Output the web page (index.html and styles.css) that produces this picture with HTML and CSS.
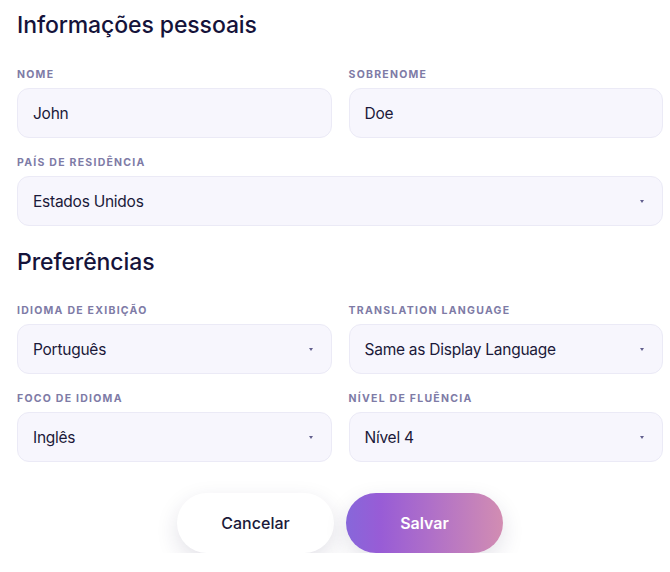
FILE: index.html
```html
<!DOCTYPE html>
<html lang="pt">
<head>
<meta charset="utf-8">
<title>Informações pessoais</title>
<link rel="stylesheet" href="styles.css">
</head>
<body>
<main class="form">
  <h2 class="section-title first">Informações pessoais</h2>
  <div class="grid">
    <div class="field">
      <div class="label">Nome</div>
      <div class="control">John</div>
    </div>
    <div class="field">
      <div class="label">Sobrenome</div>
      <div class="control">Doe</div>
    </div>
    <div class="field full">
      <div class="label">País de residência</div>
      <div class="control select">Estados Unidos<span class="caret"></span></div>
    </div>
  </div>

  <h2 class="section-title">Preferências</h2>
  <div class="grid">
    <div class="field">
      <div class="label">Idioma de exibição</div>
      <div class="control select">Português<span class="caret"></span></div>
    </div>
    <div class="field">
      <div class="label">Translation Language</div>
      <div class="control select">Same as Display Language<span class="caret"></span></div>
    </div>
    <div class="field">
      <div class="label">Foco de idioma</div>
      <div class="control select">Inglês<span class="caret"></span></div>
    </div>
    <div class="field">
      <div class="label">Nível de fluência</div>
      <div class="control select">Nível 4<span class="caret"></span></div>
    </div>
  </div>

  <div class="actions">
    <button class="btn btn-cancel">Cancelar</button>
    <button class="btn btn-save">Salvar</button>
  </div>
</main>
</body>
</html>
```

FILE: styles.css
```css
* { box-sizing: border-box; }

html, body {
  margin: 0;
  padding: 0;
  background: #ffffff;
}

body {
  font-family: Inter, "Noto Sans", "Liberation Sans", sans-serif;
  color: #1b1939;
}

.form {
  width: 646px;
  margin-left: 17px;
  padding-top: 10px;
}

.section-title {
  margin: 21px 0 27px;
  font-size: 23px;
  line-height: 30px;
  font-weight: 500;
  color: #15133a;
  letter-spacing: -0.1px;
}

.section-title.first {
  margin-top: 0;
  margin-bottom: 28px;
}

.grid {
  display: grid;
  grid-template-columns: 1fr 1fr;
  column-gap: 17px;
  row-gap: 18px;
}

.field {
  display: flex;
  flex-direction: column;
  gap: 6px;
}

.field.full {
  grid-column: 1 / -1;
}

.label {
  font-size: 10.5px;
  line-height: 14px;
  font-weight: 700;
  text-transform: uppercase;
  letter-spacing: 1.25px;
  color: #7e7ba6;
}

.control {
  position: relative;
  height: 50px;
  display: flex;
  align-items: center;
  padding: 0 15px;
  background: #f7f6fd;
  border: 1px solid #ebeaf6;
  border-radius: 12px;
  font-size: 15.5px;
  letter-spacing: -0.25px;
  color: #1b1939;
}

.caret {
  position: absolute;
  right: 18px;
  top: 50%;
  margin-top: -1px;
  width: 0;
  height: 0;
  border-left: 2.5px solid transparent;
  border-right: 2.5px solid transparent;
  border-top: 3px solid #625f8e;
}

.actions {
  display: flex;
  justify-content: center;
  gap: 12px;
  margin-top: 31px;
}

.btn {
  width: 157px;
  height: 60px;
  border-radius: 30px;
  border: none;
  font-family: inherit;
  font-size: 16px;
  font-weight: 600;
  cursor: pointer;
  box-shadow: 0 8px 22px rgba(40, 30, 80, 0.13);
}

.btn-cancel {
  background: #ffffff;
  color: #1b1939;
  font-weight: 500;
}

.btn-save {
  color: #ffffff;
  background: linear-gradient(90deg, #8767da 0%, #985cd6 22%, #b070c8 55%, #d28db2 100%);
}
```
